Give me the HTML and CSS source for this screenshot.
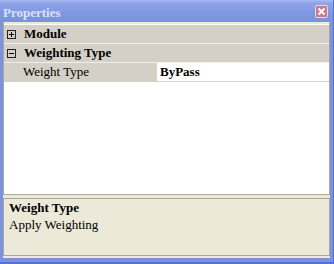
FILE: index.html
```html
<!DOCTYPE html>
<html lang="en">
<head>
  <meta charset="UTF-8" />
  <title>Properties</title>
  <link rel="stylesheet" href="styles.css">
</head>
<body>

  <div class="window">
    <div class="titlebar">
      <span class="title">Properties</span>
      <span class="close-btn">
        <svg width="13" height="13" viewBox="0 0 13 13">
          <path d="M3.5 3.5 L9.5 9.5 M9.5 3.5 L3.5 9.5" stroke="#fff" stroke-width="2" />
        </svg>
      </span>
    </div>

    <div class="client">
      <!-- Property grid -->
      <div class="grid">
        <div class="row category">
          <span class="toggle">
            <svg width="9" height="9" viewBox="0 0 9 9">
              <rect x="0.5" y="0.5" width="8" height="8" fill="none" stroke="#222" />
              <path d="M2 4.5 H7 M4.5 2 V7" stroke="#000" />
            </svg>
          </span>
          <span class="label">Module</span>
        </div>
        <div class="row category">
          <span class="toggle">
            <svg width="9" height="9" viewBox="0 0 9 9">
              <rect x="0.5" y="0.5" width="8" height="8" fill="none" stroke="#222" />
              <path d="M2 4.5 H7" stroke="#000" />
            </svg>
          </span>
          <span class="label">Weighting Type</span>
        </div>
        <div class="row prop">
          <span class="prop-name">Weight Type</span>
          <span class="prop-value">ByPass</span>
        </div>
      </div>

      <!-- Help pane -->
      <div class="help">
        <div class="help-title">Weight Type</div>
        <div class="help-text">Apply Weighting</div>
      </div>
    </div>
  </div>

</body>
</html>
```

FILE: styles.css
```css
*, *::before, *::after {
  box-sizing: border-box;
}

:root {
  --frame: #7b93df;
  --frame-dark: #5b6ed3;
  --face: #d4d0c8;
  --panel: #ece9d8;
  --edge: #aca899;
}

html, body {
  margin: 0;
  padding: 0;
  background: var(--frame);
  font-family: 'Liberation Serif', 'DejaVu Serif', serif;
  font-size: 13px;
  color: #000;
}

.window {
  width: 334px;
  height: 264px;
  display: flex;
  flex-direction: column;
  background: var(--frame);
  border-right: 1px solid var(--frame-dark);
  border-bottom: 2px solid var(--frame-dark);
}

.titlebar {
  height: 22px;
  flex: none;
  display: flex;
  align-items: center;
  justify-content: space-between;
  padding: 0 5px 0 3px;
  background: linear-gradient(to bottom, #a9bcf1 0px, #8ea6e8 3px, #7f98e1 12px, #7b93de 22px);
}

.title {
  color: #dbe3f8;
  font-weight: 700;
  font-size: 13px;
  margin-top: 3px;
}

.close-btn {
  width: 13px;
  height: 13px;
  display: flex;
  background: #c97a92;
  border: 1px solid #e4d8ec;
  border-radius: 2px;
  margin-top: 1px;
}

.close-btn svg {
  margin: -1px;
}

.client {
  flex: 1;
  display: flex;
  flex-direction: column;
  margin: 0 3px 4px 3px;
  background: var(--panel);
}

.grid {
  height: 173px;
  flex: none;
  background: #fff;
  border: 1px solid var(--edge);
  border-top-color: var(--panel);
  padding-top: 2px;
  box-shadow: inset 0 1px 0 var(--panel);
}

.row {
  height: 19px;
  display: flex;
  align-items: center;
  border-bottom: 1px solid #f1efe6;
  background: var(--face);
}

.category .toggle {
  width: 9px;
  height: 9px;
  display: flex;
  margin: 0 8px 0 3px;
}

.category .label {
  font-weight: 700;
}

.prop {
  align-items: stretch;
  border-bottom-color: var(--face);
  background: #fff;
}

.prop-name {
  width: 153px;
  flex: none;
  display: flex;
  align-items: center;
  padding-left: 19px;
  background: var(--face);
}

.prop-value {
  flex: 1;
  display: flex;
  align-items: center;
  padding-left: 3px;
  font-weight: 700;
}

.help {
  flex: 1;
  margin-top: 3px;
  border: 1px solid var(--edge);
  padding: 1px 5px;
  margin-bottom: 2px;
}

.help-title {
  font-weight: 700;
  height: 16px;
}

.help-text {
  margin-top: 1px;
}
```
